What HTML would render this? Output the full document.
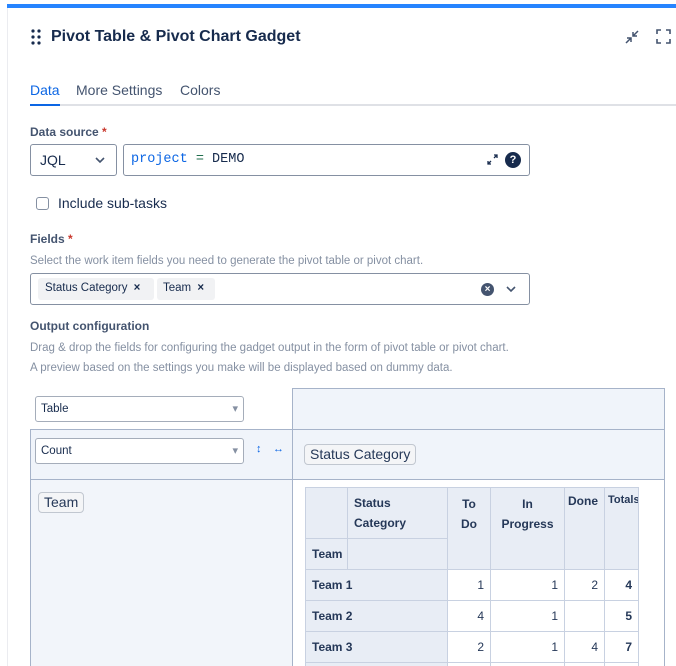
<!DOCTYPE html>
<html><head><meta charset="utf-8"><style>
*{box-sizing:border-box;margin:0;padding:0}
html,body{width:676px;height:666px;overflow:hidden}
body{background:#fff;font-family:"Liberation Sans",sans-serif;color:#172b4d;position:relative}
#w{position:relative;width:676px;height:666px;overflow:hidden}
.a{position:absolute;white-space:nowrap}
.lbl{font-size:12px;font-weight:bold;color:#44546f}
.help{font-size:11.5px;color:#8590a2}
.box{position:absolute;border:1px solid #8590a2;border-radius:3px;background:#fff}
.sel{position:absolute;border:1px solid #a5adba;border-radius:3px;background:#fff;font-size:11.5px;padding:6px 5px;color:#172b4d}
.sel:after{content:"▾";position:absolute;right:5px;top:5px;color:#8590a2;font-size:11px}
.chip{position:absolute;border:1px solid #c1c7d0;border-radius:4px;background:#f4f5f7;font-size:14px;padding:1px 5px;color:#253858}
table{border-collapse:collapse;font-size:12px;color:#253858;table-layout:fixed}
td{border:1px solid #c8d1e1;padding:0 6px;overflow:hidden;white-space:nowrap}
.h{background:#e8edf5;font-weight:bold}
.n{background:#fff;text-align:right}
</style></head><body><div id="w">
<div class="a" style="left:7px;top:4px;width:669px;height:4px;background:#2684ff"></div>
<div class="a" style="left:7px;top:8px;width:1px;height:658px;background:#ebecf0"></div>
<svg class="a" style="left:31px;top:29px" width="10" height="16"><g fill="#172b4d"><circle cx="2" cy="2" r="1.6"/><circle cx="8" cy="2" r="1.6"/><circle cx="2" cy="8" r="1.6"/><circle cx="8" cy="8" r="1.6"/><circle cx="2" cy="14" r="1.6"/><circle cx="8" cy="14" r="1.6"/></g></svg>
<div class="a" style="left:51px;top:28px;font-size:16px;font-weight:bold;color:#172b4d">Pivot Table &amp; Pivot Chart Gadget</div>
<svg class="a" style="left:624px;top:29px" width="16" height="16" fill="none" stroke="#44546f" stroke-width="1.5"><path d="M2 14L7 9M3 9H7V13M14 2L9 7M9 3V7H13"/></svg>
<svg class="a" style="left:656px;top:29px" width="15" height="15" fill="none" stroke="#44546f" stroke-width="1.6"><path d="M1 5V1H5M10 1H14V5M14 10V14H10M5 14H1V10"/></svg>
<div class="a" style="left:30px;top:82px;font-size:14px;color:#0c66e4">Data</div>
<div class="a" style="left:76px;top:82px;font-size:14px;color:#44546f">More Settings</div>
<div class="a" style="left:180px;top:82px;font-size:14px;color:#44546f">Colors</div>
<div class="a" style="left:30px;top:104px;width:646px;height:2px;background:#dfe1e6"></div>
<div class="a" style="left:30px;top:104px;width:30px;height:2px;background:#0c66e4"></div>
<div class="a lbl" style="left:30px;top:125px">Data source <span style="color:#c9372c">*</span></div>
<div class="box" style="left:30px;top:144px;width:87px;height:32px"></div>
<div class="a" style="left:40px;top:152px;font-size:14px">JQL</div>
<svg class="a" style="left:95px;top:157px" width="10" height="7" fill="none" stroke="#44546f" stroke-width="1.6"><path d="M1 1L5 5L9 1"/></svg>
<div class="box" style="left:123px;top:144px;width:407px;height:32px"></div>
<div class="a" style="left:131px;top:152px;font-family:'Liberation Mono',monospace;font-size:13.5px"><span style="color:#0c66e4">project</span> <span style="color:#216e4e">=</span> DEMO</div>
<svg class="a" style="left:487px;top:154px" width="11" height="11" fill="none" stroke="#172b4d" stroke-width="1.3"><path d="M1 10L4 7M1 7V10H4M10 1L7 4M7 1H10V4"/></svg>
<div class="a" style="left:505px;top:152px;width:16px;height:16px;border-radius:50%;background:#172b4d;color:#fff;font-size:11px;font-weight:bold;text-align:center;line-height:16px">?</div>
<div class="a" style="left:36px;top:197px;width:13px;height:13px;border:1.5px solid #8590a2;border-radius:3px"></div>
<div class="a" style="left:58px;top:195px;font-size:14px;color:#172b4d">Include sub-tasks</div>
<div class="a lbl" style="left:30px;top:232px">Fields <span style="color:#c9372c">*</span></div>
<div class="a help" style="left:30px;top:255px">Select the work item fields you need to generate the pivot table or pivot chart.</div>
<div class="box" style="left:30px;top:273px;width:500px;height:32px"></div>
<div class="a" style="left:38px;top:278px;height:22px;width:116px;background:#f1f2f4;border-radius:3px;font-size:11.5px;padding:4px 7px">Status Category <span style="margin-left:3px;font-weight:bold">×</span></div>
<div class="a" style="left:157px;top:278px;height:22px;width:58px;background:#f1f2f4;border-radius:3px;font-size:11.5px;padding:4px 6px">Team <span style="margin-left:3px;font-weight:bold">×</span></div>
<div class="a" style="left:481px;top:283px;width:13px;height:13px;border-radius:50%;background:#44546f;color:#fff;font-size:10px;font-weight:bold;text-align:center;line-height:13px">×</div>
<svg class="a" style="left:506px;top:286px" width="10" height="7" fill="none" stroke="#44546f" stroke-width="1.6"><path d="M1 1L5 5L9 1"/></svg>
<div class="a lbl" style="left:30px;top:319px">Output configuration</div>
<div class="a help" style="left:30px;top:342px">Drag &amp; drop the fields for configuring the gadget output in the form of pivot table or pivot chart.</div>
<div class="a help" style="left:30px;top:362px">A preview based on the settings you make will be displayed based on dummy data.</div>
<div class="a" style="left:292px;top:388px;width:373px;height:42px;background:#f0f4fa;border:1px solid #a6b3c9"></div>
<div class="a" style="left:30px;top:429px;width:263px;height:51px;background:#f0f4fa;border:1px solid #a6b3c9"></div>
<div class="a" style="left:292px;top:429px;width:373px;height:51px;background:#f0f4fa;border:1px solid #a6b3c9"></div>
<div class="a" style="left:30px;top:479px;width:263px;height:200px;background:#f2f5fa;border:1px solid #a6b3c9"></div>
<div class="a" style="left:292px;top:479px;width:373px;height:200px;background:#fff;border:1px solid #a6b3c9"></div>
<div class="sel" style="left:35px;top:396px;width:209px;height:26px">Table</div>
<div class="sel" style="left:35px;top:438px;width:209px;height:26px">Count</div>
<div class="a" style="left:256px;top:443px;font-size:11px;color:#0c66e4">↕</div>
<div class="a" style="left:273px;top:443px;font-size:11px;color:#0c66e4">↔</div>
<div class="chip" style="left:304px;top:444px;height:21px">Status Category</div>
<div class="chip" style="left:38px;top:492px;height:21px">Team</div>
<table class="a" style="left:305px;top:487px;width:333px">
<colgroup><col style="width:42px"><col style="width:100px"><col style="width:43px"><col style="width:74px"><col style="width:40px"><col style="width:34px"></colgroup>
<tr style="height:51px"><td class="h"></td><td class="h" style="line-height:20px">Status<br>Category</td><td class="h" rowspan="2" style="text-align:center;vertical-align:top;padding:6px 0 0;line-height:20px">To<br>Do</td><td class="h" rowspan="2" style="text-align:center;vertical-align:top;padding:6px 0 0;line-height:20px">In<br>Progress</td><td class="h" rowspan="2" style="vertical-align:top;padding:6px 0 0 3px">Done</td><td class="h" rowspan="2" style="vertical-align:top;padding:6px 0 0 3px;font-size:11px">Totals</td></tr>
<tr style="height:31px"><td class="h">Team</td><td class="h"></td></tr>
<tr style="height:31px"><td class="h" colspan="2">Team 1</td><td class="n">1</td><td class="n">1</td><td class="n">2</td><td class="n" style="font-weight:bold">4</td></tr>
<tr style="height:31px"><td class="h" colspan="2">Team 2</td><td class="n">4</td><td class="n">1</td><td class="n"></td><td class="n" style="font-weight:bold">5</td></tr>
<tr style="height:31px"><td class="h" colspan="2">Team 3</td><td class="n">2</td><td class="n">1</td><td class="n">4</td><td class="n" style="font-weight:bold">7</td></tr>
<tr style="height:31px"><td class="h" colspan="2"></td><td class="n"></td><td class="n"></td><td class="n"></td><td class="n"></td></tr>
</table>
</div></body></html>
